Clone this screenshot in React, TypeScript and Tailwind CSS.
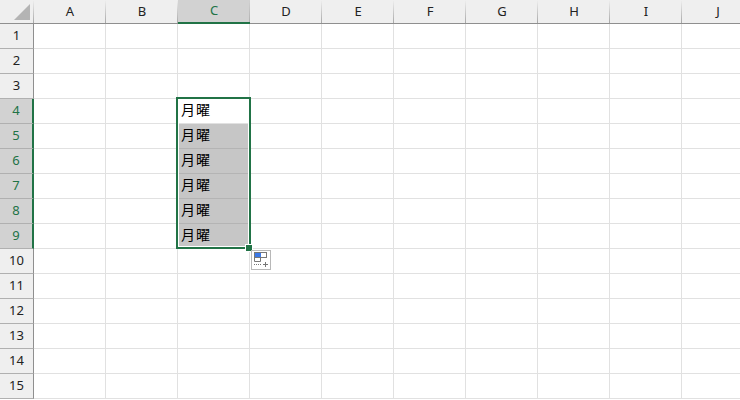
const COLS = ["A", "B", "C", "D", "E", "F", "G", "H", "I", "J"];
const ROWS = [1, 2, 3, 4, 5, 6, 7, 8, 9, 10, 11, 12, 13, 14, 15];
const FILLED = [5, 6, 7, 8, 9];

const PasteOptions = () => (
  <svg width="20" height="20" viewBox="0 0 20 20" className="block">
    <rect x="0.5" y="0.5" width="19" height="19" fill="#fff" stroke="#b8b8b8" />
    <rect x="4" y="3" width="6" height="5" fill="#3b78e7" />
    <rect x="3.5" y="2.5" width="12" height="5" fill="none" stroke="#777" />
    <path d="M3.5 7.5v4h6v-4" fill="none" stroke="#777" />
    <path d="M3 14.5h7" stroke="#777" strokeDasharray="1 1" />
    <path d="M12 14.5h5M14.5 12v5" stroke="#777" />
  </svg>
);

const App = () => {
  return (
    <div className="w-[740px] h-[400px] overflow-hidden bg-white font-['Noto_Sans','Noto_Sans_CJK_JP',sans-serif] text-[13px] text-[#222]">
      <div className="relative grid grid-cols-[34px_repeat(10,72px)] grid-rows-[24px_repeat(15,25px)] w-[754px]">
        <div className="flex items-start justify-end bg-[#efefef] bg-[linear-gradient(to_bottom,#efefef,#a8a8a8)] bg-no-repeat bg-right bg-[length:1px_100%] border-b border-b-[#8f8f8f] pr-[4px] pt-[4px]">
          <svg width="16" height="16" viewBox="0 0 16 16" className="block">
            <path d="M16 0v16H0z" fill="#b4b4b4" />
          </svg>
        </div>
        {COLS.map((c) =>
          c === "C" ? (
            <div key={c} className="flex items-center justify-center bg-[#d2d2d2] bg-[linear-gradient(to_bottom,#d2d2d2,#b0b0b0)] bg-no-repeat bg-right bg-[length:1px_100%] border-b-2 border-b-[#217346] text-[#217346] pb-[1px]">
              {c}
            </div>
          ) : (
            <div key={c} className="flex items-center justify-center bg-[#efefef] bg-[linear-gradient(to_bottom,#efefef,#a8a8a8)] bg-no-repeat bg-right bg-[length:1px_100%] border-b border-b-[#8f8f8f]">
              {c}
            </div>
          )
        )}
        {ROWS.map((r) => {
          const active = r >= 4 && r <= 9;
          return [
            <div
              key={`h${r}`}
              className={
                active
                  ? "flex items-center justify-center bg-[#d2d2d2] border-r-2 border-r-[#217346] border-b border-b-[#b0b0b0] text-[#217346]"
                  : "flex items-center justify-center bg-[#efefef] border-r border-r-[#8f8f8f] border-b border-b-[#b0b0b0]"
              }
            >
              {r}
            </div>,
            ...COLS.map((c) => {
              const filled = c === "C" && FILLED.includes(r);
              const first = c === "C" && r === 4;
              return (
                <div
                  key={`${c}${r}`}
                  className={
                    filled
                      ? "flex items-center pl-[3px] pb-[3px] bg-[#c6c6c6] border-r border-b border-[#b4b4b4] text-[14px] tracking-[1px] text-black"
                      : "flex items-center pl-[3px] pb-[3px] bg-white border-r border-b border-[#e1e1e1] text-[14px] tracking-[1px] text-black"
                  }
                >
                  {filled || first ? "月曜" : ""}
                </div>
              );
            }),
          ];
        })}
        <div className="absolute left-[176px] top-[97px] w-[75px] h-[152px] border-2 border-[#217346] shadow-[inset_0_0_0_1px_#ffffff] pointer-events-none" />
        <div className="absolute left-[246px] top-[245px] w-[6px] h-[6px] bg-[#217346] outline outline-1 outline-white" />
        <div className="absolute left-[251px] top-[250px]">
          <PasteOptions />
        </div>
      </div>
    </div>
  );
};

export default App;
